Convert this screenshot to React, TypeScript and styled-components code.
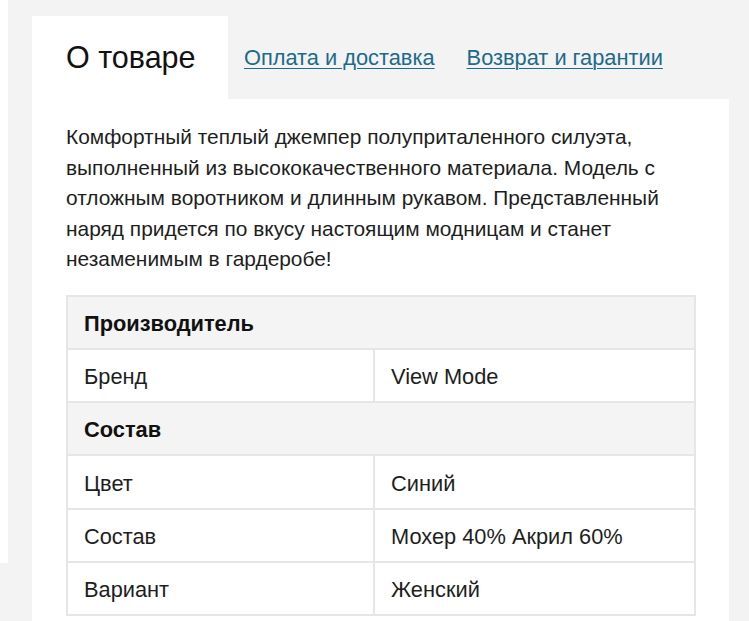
import styled, { createGlobalStyle } from "styled-components";

const GlobalStyle = createGlobalStyle`
    html, body {
        margin: 0;
        padding: 0;
        background: #f3f3f3;
        font-family: "Liberation Sans", Arial, sans-serif;
        color: #1e1e1e;
    }
`

type Spec = { label: string; value?: string; group?: boolean };

const specs: Spec[] = [
    { label: "Производитель", group: true },
    { label: "Бренд", value: "View Mode" },
    { label: "Состав", group: true },
    { label: "Цвет", value: "Синий" },
    { label: "Состав", value: "Мохер 40% Акрил 60%" },
    { label: "Вариант", value: "Женский" },
];

export default function App() {
    return (
        <>
            <GlobalStyle />
            <Page>
                <SideStrip />
                <Main>
                    <Tabs>
                        <ActiveTab>О товаре</ActiveTab>
                        <TabLink href="#">Оплата и доставка</TabLink>
                        <TabLink href="#">Возврат и гарантии</TabLink>
                    </Tabs>
                    <Panel>
                        <Description>
                            Комфортный теплый джемпер полуприталенного силуэта,
                            выполненный из высококачественного материала. Модель с
                            отложным воротником и длинным рукавом. Представленный
                            наряд придется по вкусу настоящим модницам и станет
                            незаменимым в гардеробе!
                        </Description>
                        <Table>
                            <colgroup>
                                <col style={{ width: 307 }} />
                                <col />
                            </colgroup>
                            <tbody>
                                {specs.map((s, i) =>
                                    s.group ? (
                                        <tr key={i}>
                                            <GroupCell colSpan={2}>{s.label}</GroupCell>
                                        </tr>
                                    ) : (
                                        <tr key={i}>
                                            <Cell>{s.label}</Cell>
                                            <Cell>{s.value}</Cell>
                                        </tr>
                                    )
                                )}
                            </tbody>
                        </Table>
                    </Panel>
                </Main>
            </Page>
        </>
    )
}

const Page = styled.div`
    display: flex;
    min-height: 621px;
`

const SideStrip = styled.div`
    width: 8px;
    height: 563px;
    background: #ffffff;
    flex-shrink: 0;
`

const Main = styled.div`
    padding: 16px 20px 0 24px;
    width: 697px;
`

const Tabs = styled.div`
    display: flex;
    align-items: stretch;
    height: 83px;
`

const ActiveTab = styled.div`
    background: #ffffff;
    display: flex;
    align-items: center;
    padding: 0 0 0 34px;
    font-size: 30.5px;
    color: #111;
    width: 196px;
    box-sizing: border-box;
`

const TabLink = styled.a`
    display: flex;
    align-items: center;
    padding: 0 16px;
    font-size: 21.8px;
    color: #1d6a8b;
    text-decoration: underline;
    text-underline-offset: 3px;
    text-decoration-thickness: 1px;
`

const Panel = styled.div`
    background: #ffffff;
    padding: 23px 33px 20px 34px;
    min-height: 520px;
    box-sizing: border-box;
`

const Description = styled.p`
    margin: 0 0 20px;
    font-size: 20.9px;
    line-height: 30.5px;
    color: #1e1e1e;
`

const Table = styled.table`
    width: 630px;
    border-collapse: collapse;
    table-layout: fixed;
    font-size: 21.8px;
`

const Cell = styled.td`
    border: 2px solid #e6e6e6;
    padding: 3px 16px 0;
    height: 48.3px;
    color: #1e1e1e;
`

const GroupCell = styled.td`
    border: 2px solid #e6e6e6;
    background: #f4f4f4;
    padding: 3px 16px 0;
    height: 48.3px;
    font-weight: bold;
    color: #111;
`
